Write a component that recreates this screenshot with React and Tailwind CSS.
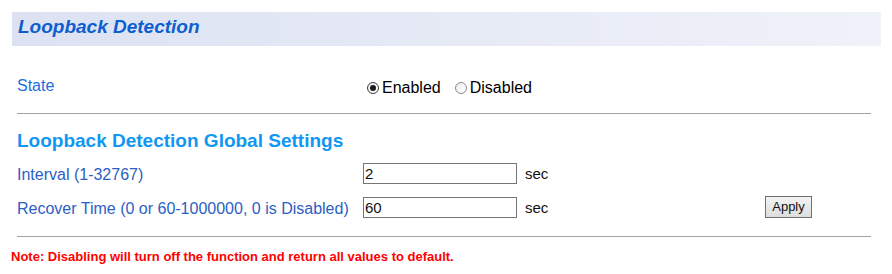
import React from "react";

function Radio({ checked }) {
  return (
    <span
      className={
        "flex items-center justify-center w-[12px] h-[12px] rounded-full border bg-gradient-to-br from-[#ececec] to-[#ffffff] " +
        (checked ? "border-[#3c3c3c]" : "border-[#8c8c8c]")
      }
    >
      {checked ? <span className="w-[6px] h-[6px] rounded-full bg-[#1a1a1a]" /> : null}
    </span>
  );
}

export default function App() {
  return (
    <div className="w-[892px] h-[274px] bg-white overflow-hidden font-['Liberation_Sans',Arial,sans-serif]">
      <div className="pt-[12px] pl-[12px]">
        <div className="w-[869px] h-[34px] bg-gradient-to-r from-[#dce2f2] to-[#f0f2f9] pl-[6px] pt-[4px]">
          <h1 className="text-[19px] leading-[22px] font-bold italic text-[#0d5ecf]">
            Loopback Detection
          </h1>
        </div>
      </div>

      <div className="ml-[17px] w-[854px]">
        <div className="mt-[28px] flex items-start h-[24px]">
          <div className="w-[346px] text-[16px] leading-[23px] text-[#1b6de0]">State</div>
          <div className="mt-[2px] flex items-center h-[23px] text-[16px] leading-[23px] text-black">
            <span className="ml-[4px]">
              <Radio checked />
            </span>
            <span className="ml-[3px]">Enabled</span>
            <span className="ml-[14px]">
              <Radio />
            </span>
            <span className="ml-[3px]">Disabled</span>
          </div>
        </div>

        <div className="mt-[15px] border-t border-[#a3a3a3]" />

        <h2 className="mt-[16px] text-[19px] leading-[22px] font-bold text-[#0f97f3]">
          Loopback Detection Global Settings
        </h2>

        <div className="mt-[11px] flex items-start h-[21px]">
          <div className="w-[346px] pt-[1px] text-[16px] leading-[21px] text-[#2c60c4]">
            Interval (1-32767)
          </div>
          <input
            type="text"
            defaultValue="2"
            className="w-[154px] h-[21px] border border-[#767676] px-[1px] text-[15px] leading-[19px] text-[#111] outline-none bg-white"
          />
          <span className="ml-[8px] text-[15px] leading-[21px] text-[#111]">sec</span>
        </div>

        <div className="mt-[13px] flex items-start h-[21px]">
          <div className="w-[346px] pt-[1px] text-[16px] leading-[21px] text-[#2c60c4]">
            Recover Time (0 or 60-1000000, 0 is Disabled)
          </div>
          <input
            type="text"
            defaultValue="60"
            className="w-[154px] h-[21px] border border-[#767676] px-[1px] text-[15px] leading-[19px] text-[#111] outline-none bg-white"
          />
          <span className="ml-[8px] w-[240px] text-[15px] leading-[21px] text-[#111]">sec</span>
          <button
            type="button"
            className="-mt-[1px] h-[22px] w-[47px] border border-[#707070] bg-gradient-to-b from-[#f3f3f3] to-[#dddddd] text-[13px] leading-[18px] text-[#111]"
          >
            Apply
          </button>
        </div>

        <div className="mt-[18px] border-t border-[#a3a3a3]" />
      </div>

      <p className="ml-[11px] mt-[12px] text-[13px] leading-[16px] font-bold text-[#ff0000]">
        Note: Disabling will turn off the function and return all values to default.
      </p>
    </div>
  );
}
